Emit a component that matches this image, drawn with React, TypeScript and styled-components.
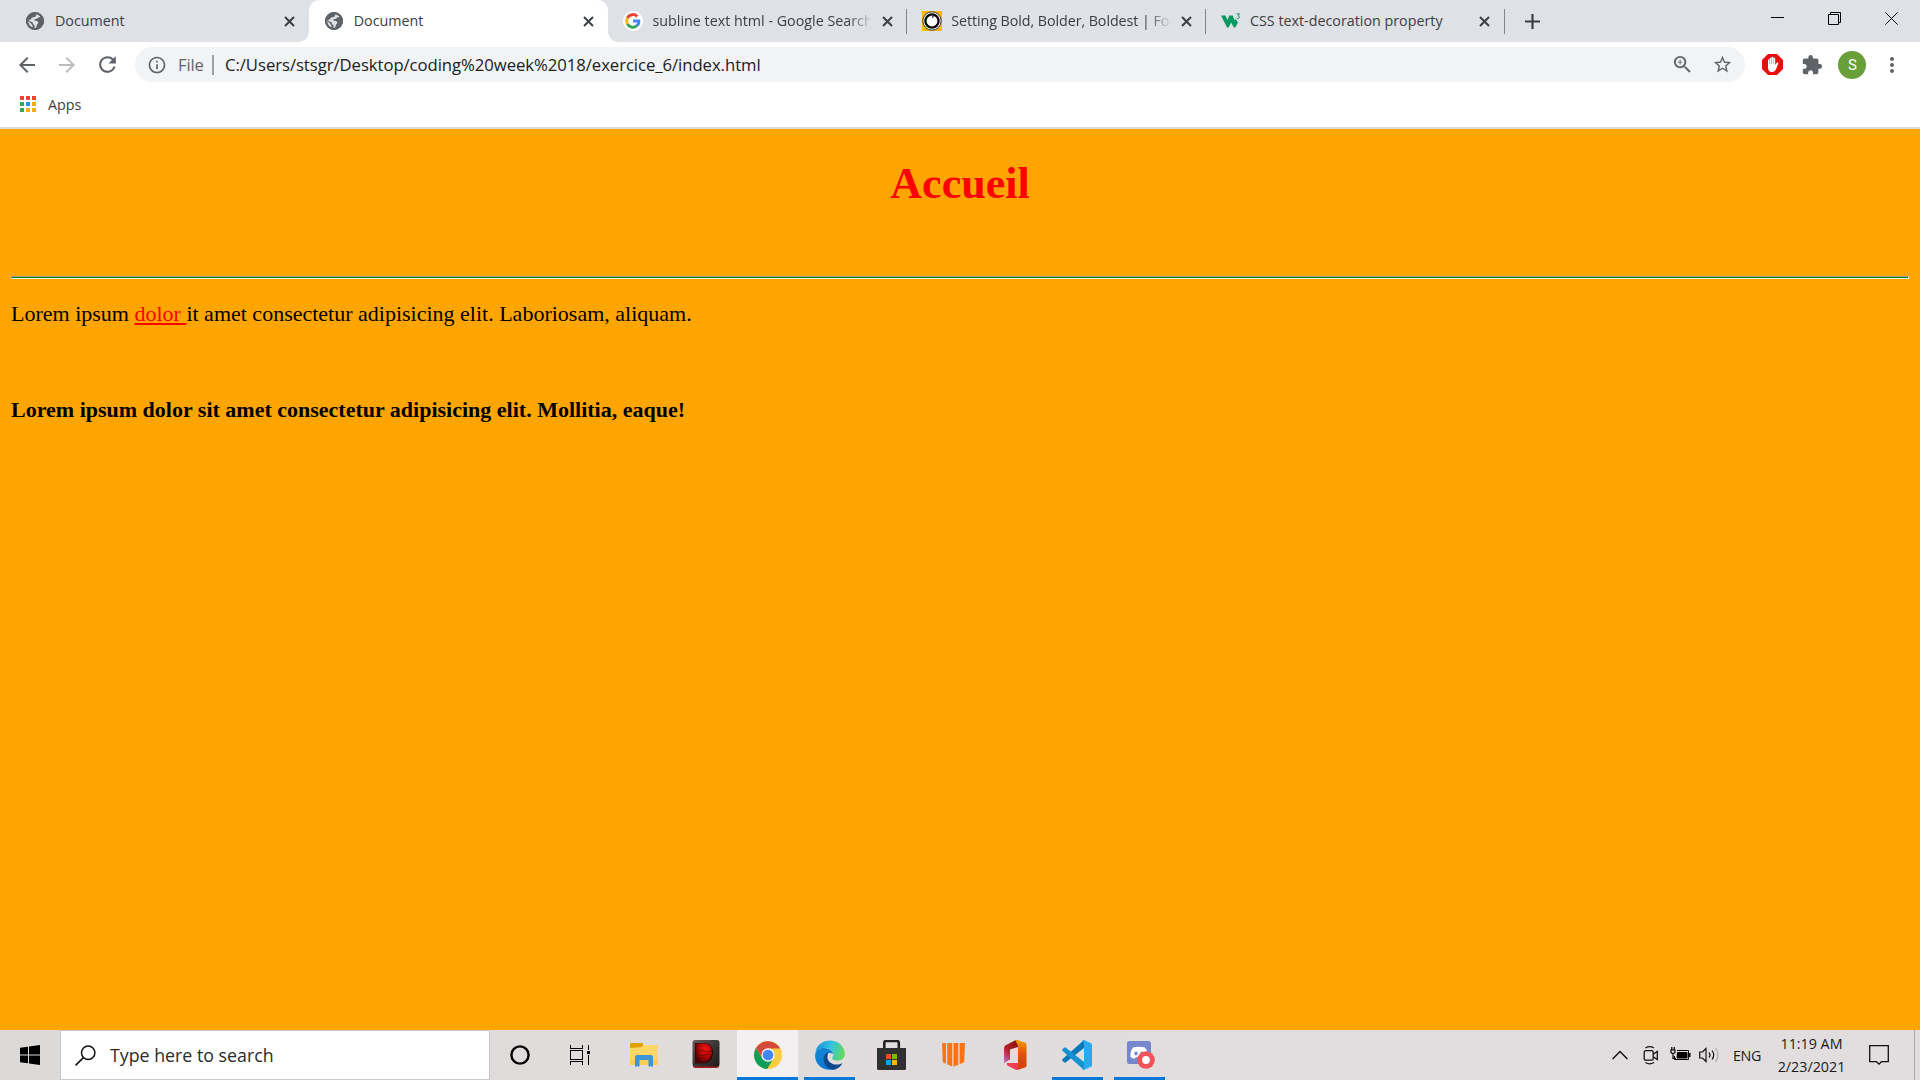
import React from "react";
import styled, { createGlobalStyle, css } from "styled-components";
import {
  MdArrowBack,
  MdArrowForward,
  MdRefresh,
  MdInfoOutline,
  MdZoomIn,
  MdStarBorder,
  MdExtension,
  MdMoreVert,
} from "react-icons/md";

const Global = createGlobalStyle`
  * { box-sizing: border-box; }
  body { margin: 0; background: #ffa500; overflow: hidden; }
  svg { display: block; flex: none; }
`;

const Screen = styled.div`
  width: 1920px;
  height: 1080px;
  display: flex;
  flex-direction: column;
  overflow: hidden;
  font-family: "Open Sans", "Noto Sans", sans-serif;
`;

/* ---------- browser frame ---------- */

const TabStrip = styled.div`
  height: 42px;
  background: #dee1e6;
  display: flex;
  padding-left: 10px;
`;

const TabBox = styled.div<{ $active?: boolean; $divider?: boolean }>`
  position: relative;
  width: 298.75px;
  height: 42px;
  display: flex;
  align-items: center;
  padding: 0 9px 0 15.5px;
  color: #3c4043;
  ${(p) =>
    p.$active &&
    css`
      background: #fff;
      border-radius: 10px 10px 0 0;
      &::before,
      &::after {
        content: "";
        position: absolute;
        bottom: 0;
        width: 10px;
        height: 10px;
      }
      &::before {
        left: -10px;
        background: radial-gradient(circle at 0 0, transparent 9.5px, #fff 10px);
      }
      &::after {
        right: -10px;
        background: radial-gradient(circle at 100% 0, transparent 9.5px, #fff 10px);
      }
    `}
  ${(p) =>
    p.$divider &&
    css`
      &::after {
        content: "";
        position: absolute;
        right: -1px;
        top: 9px;
        width: 1px;
        height: 25px;
        background: #80868b;
      }
    `}
`;

const Favicon = styled.div`
  width: 20px;
  height: 20px;
  display: grid;
  place-items: center;
  margin-right: 9.5px;
`;

const TabTitle = styled.div<{ $fade?: boolean; $spacing?: number }>`
  width: 218px;
  height: 22px;
  line-height: 22px;
  margin-top: -1px;
  overflow: hidden;
  white-space: nowrap;
  font-size: 14.3px;
  letter-spacing: ${(p) => p.$spacing ?? 0}px;
  ${(p) => p.$fade && css`mask-image: linear-gradient(90deg, #000 195px, transparent 221px);`}
`;

const TabClose = styled.div`
  width: 20px;
  display: grid;
  place-items: center;
  margin-left: 7px;
`;

const NewTab = styled.div`
  width: 58px;
  display: grid;
  place-items: center;
`;

const WindowButtons = styled.div`
  margin-left: auto;
  display: flex;
  height: 37px;
  align-items: center;
`;

const WindowButton = styled.div`
  width: 57px;
  display: grid;
  place-items: center;
`;

const Toolbar = styled.div`
  height: 45px;
  background: #fff;
  display: flex;
  align-items: center;
  padding-left: 7px;
  color: #5f6368;
`;

const NavButton = styled.div<{ $dim?: boolean }>`
  width: 40px;
  display: grid;
  place-items: center;
  color: ${(p) => (p.$dim ? "#bbbdbf" : "#5f6368")};
`;

const Omnibox = styled.div`
  width: 1610px;
  height: 35px;
  margin-left: 8px;
  border-radius: 18px;
  background: #f1f3f4;
  display: flex;
  align-items: center;
  padding: 0 11px 0 12px;
`;

const Scheme = styled.span`
  margin-left: 11px;
  width: 34px;
  font-size: 16.5px;
  letter-spacing: -0.1px;
  line-height: 24px;
`;

const SchemeDivider = styled.span`
  width: 2px;
  height: 20px;
  background: #9aa0a6;
  margin-right: 11px;
`;

const Address = styled.span`
  flex: 1;
  color: #202124;
  font-size: 16.7px;
  line-height: 24px;
  letter-spacing: -0.05px;
`;

const OmniAction = styled.div`
  width: 40px;
  display: grid;
  place-items: center;
  &:last-child {
    width: 24px;
    margin-left: 8px;
  }
`;

const Extensions = styled.div`
  display: flex;
  align-items: center;
  padding-left: 7.4px;
`;

const Avatar = styled.div`
  width: 28px;
  height: 28px;
  border-radius: 50%;
  background: #689f38;
  color: #fff;
  display: grid;
  place-items: center;
  font: 15px/28px Roboto, sans-serif;
`;

const Bookmarks = styled.div`
  height: 42px;
  background: #fff;
  border-bottom: 2px solid #dadce0;
  display: flex;
  align-items: center;
  padding: 0 0 6px 20px;
  color: #3c4043;
  font-size: 14.3px;
`;

const AppGrid = styled.div`
  display: grid;
  grid-template-columns: repeat(3, 4px);
  gap: 2.2px;
  margin-right: 11.5px;
`;

const AppDot = styled.i<{ $c: string }>`
  width: 4px;
  height: 4px;
  background: ${(p) => p.$c};
`;

/* ---------- document ---------- */

const Page = styled.main`
  height: 901px;
  background: #ffa500;
  padding: 30px 11px 0;
  font-family: "Liberation Serif", "Times New Roman", serif;
  font-size: 22px;
  line-height: 25px;
  color: #000;
`;

const Heading = styled.h1`
  margin: 0;
  font-size: 44px;
  line-height: 50px;
  text-align: center;
  color: red;
`;

const Rule = styled.hr`
  margin: 67px 0 22px;
  height: 3px;
  border: 1px solid;
  border-color: #9a9a9a #eee #eee #9a9a9a;
  background: green;
`;

const Paragraph = styled.p`
  margin: 0;
`;

const Marked = styled.span`
  color: red;
  text-decoration: underline;
`;

const Strong = styled.p`
  margin: 71px 0 0;
  font-weight: bold;
`;

/* ---------- taskbar ---------- */

const Taskbar = styled.footer`
  height: 50px;
  display: flex;
  background: linear-gradient(90deg, #dbdad8, #e0dcdc 30%, #e2dedf);
`;

const Start = styled.div`
  width: 60px;
  display: grid;
  place-items: center;
`;

const SearchBox = styled.div`
  width: 430px;
  height: 50px;
  background: #fff;
  border: 1px solid #c8c8ca;
  display: flex;
  align-items: center;
  padding-left: 14px;
  color: #2b2b2b;
  font-size: 17.8px;
`;

const SearchHint = styled.span`
  margin-left: 14px;
  letter-spacing: 0;
  line-height: 26px;
`;

const ShellSlot = styled.div`
  width: 60px;
  display: grid;
  place-items: center;
`;

const Apps = styled.div`
  display: flex;
  margin-left: 3px;
`;

const AppSlot = styled.div<{ $state?: "open" | "focused" }>`
  width: 61.9px;
  height: 50px;
  display: grid;
  place-items: center;
  ${(p) =>
    p.$state &&
    css`
      background-image: linear-gradient(#0078d7, #0078d7)
        ${p.$state === "focused" ? ", linear-gradient(#f3f0f1, #f3f0f1)" : ""};
      background-repeat: no-repeat;
      background-position: center bottom;
      background-size: ${p.$state === "focused" ? "61px 3px, 61px 50px" : "51px 3px"};
    `}
`;

const Tray = styled.div`
  margin-left: auto;
  display: flex;
  align-items: center;
  color: #1a1a1a;
`;

const TraySlot = styled.div<{ $w: number }>`
  width: ${(p) => p.$w}px;
  display: grid;
  place-items: center;
`;

const Language = styled(TraySlot)`
  font-size: 14.3px;
  letter-spacing: -0.3px;
`;

const Clock = styled.div`
  width: 85px;
  text-align: center;
  font-size: 14.3px;
  line-height: 23px;
  letter-spacing: 0;
  white-space: nowrap;
`;

const NotificationSlot = styled.div`
  width: 60px;
  padding-left: 15px;
`;

const DesktopPeek = styled.div`
  width: 6px;
  height: 50px;
  border-left: 1px solid #aaa8a9;
`;

/* ---------- drawings ---------- */

const Cross = () => (
  <svg width="11" height="11" viewBox="0 0 11 11">
    <path d="M1 1l9 9M10 1l-9 9" stroke="#3c4043" strokeWidth="2" />
  </svg>
);

const Globe = () => (
  <svg width="18" height="18" viewBox="0 0 18 18">
    <circle cx="9" cy="9" r="9" fill="#5f6368" />
    <path d="M10.5 2.1C12 2.5 13.7 3.7 14.6 5.200L12.500 5.200 11 6.800 8.500 7.200 8.200 8.600 11.200 8.900 12.500 10.800 11 12.500 10.300 15.400 8.500 16 8.600 13.400 7 12 6.800 10.500 3.200 8.800 2.200 7.600 4.300 8 5 6.600 7 5.200 9.500 4.800z" fill="#dfe1e5" />
    <path d="M2.200 8.800C2 12 4 14.500 6.800 15.600L6.400 13.500 5 11.500z" fill="#dfe1e5" />
    <circle cx="9" cy="9" r="8" fill="none" stroke="#5f6368" strokeWidth="2" />
  </svg>
);

const GoogleMark = () => (
  <svg width="20" height="20" viewBox="0 0 20 20">
    <circle cx="10" cy="10" r="10" fill="#fff" />
    <g fill="none" strokeWidth="3">
      <path d="M4.400 7A6.100 6.100 0 0 1 14.300 5.500" stroke="#ea4335" />
      <path d="M4.400 7a6.300 6.300 0 0 0 0 6" stroke="#fbbc05" />
      <path d="M4.400 13a6.100 6.100 0 0 0 9.500 1.700" stroke="#34a853" />
      <path d="M13.900 14.700C15.500 13.300 16 11.600 15.800 10H10" stroke="#4285f4" />
    </g>
  </svg>
);

const RingMark = () => (
  <svg width="20" height="20" viewBox="0 0 20 20">
    <path d="M0 0h20v20H0z" fill="#ffb900" />
    <circle cx="10" cy="10" r="9.200" fill="#fff" stroke="#333" strokeWidth="1" />
    <circle cx="10" cy="10" r="6.600" fill="#fff" stroke="#000" strokeWidth="2.300" />
    <path d="M11.500 4.500a5.600 5.600 0 0 0-1 2.200" fill="none" stroke="#000" strokeWidth="1.200" />
  </svg>
);

const SchoolMark = () => (
  <svg width="20" height="20" viewBox="0 0 20 20">
    <path d="M0 4.500h4.500L6.500 9 8.300 4.500h3.400l2 5 1.200-1.500 2 3.700L14.200 16.500h-1.400L10.200 11.500 7.500 16.500H6z" fill="#059862" />
    <path d="M15.500 2.800h3L17 5c2.300.2 2 2.800-.4 2.500l-1-.4" fill="none" stroke="#059862" strokeWidth="1" />
  </svg>
);

const AdBlock = () => (
  <svg width="21" height="21" viewBox="0 0 21 21">
    <path d="M6 0h9l6 6v9l-6 6H6l-6-6V6z" fill="#ed0c0c" />
    <path d="M6 11V6.200a.85.850 0 0 1 1.700 0V4.600a.9.900 0 0 1 1.800 0V3.800a.9.900 0 0 1 1.900 0v.9a.9.900 0 0 1 1.800 0V11l1.600-2.200c.9-.7 1.900 0 1.400 1L13.800 15.800Q12.600 18 10 18 6 18 6 13.500z" fill="#fff" />
    <path d="M7.700 5.500v4.500M9.500 4.500V10M11.400 4.500V10" stroke="#ed0c0c" strokeWidth=".35" />
  </svg>
);

const WindowsLogo = () => (
  <svg width="20" height="20" viewBox="0 0 20 20">
    <path d="M0 2.800l8-1.100v7.800H0zM9 1.500L20 0v9.500H9zM0 10.500h8v7.800l-8-1.100zM9 10.500h11V20L9 18.500z" />
  </svg>
);

const SearchGlyph = () => (
  <svg width="21" height="21" viewBox="0 0 21 21" fill="none" stroke="#111" strokeWidth="1.500">
    <circle cx="13.200" cy="7.800" r="6.700" />
    <path d="M8.400 12.600L.6 20.400" />
  </svg>
);

const CortanaRing = () => (
  <svg width="20" height="20" viewBox="0 0 20 20">
    <circle cx="10" cy="10" r="8.600" fill="none" stroke="#000" strokeWidth="2.400" />
  </svg>
);

const TaskView = () => (
  <svg width="20" height="20" viewBox="0 0 20 20" fill="none" stroke="#000" strokeWidth="1.200" shapeRendering="crispEdges">
    <path d="M.5 0v3.500h12V0M.5 20v-3.500h12V20M.5 5.500h12v9H.5zM18.500 0v5M18.500 10v10" />
    <path d="M17 6h3v3h-3z" fill="#000" stroke="none" />
  </svg>
);

const Folder = () => (
  <svg width="28" height="24" viewBox="0 0 28 24">
    <path d="M0 1q0-1 1-1h11q1 0 1 1v5H0z" fill="#e0a106" />
    <path d="M0 5l11-.7L14 2h13q1 0 1 1v18q0 1-1 1H1q-1 0-1-1z" fill="#ffd766" />
    <path d="M0 17h28v4q0 1-1 1H1q-1 0-1-1z" fill="#fbcf55" />
    <path d="M5 23.500V14q0-2 2-2h14q2 0 2 2v9.500h-4.500V17h-9v6.500z" fill="#3d96d6" />
  </svg>
);

const RedDisc = () => (
  <svg width="28" height="30" viewBox="0 0 28 30">
    <defs>
      <linearGradient id="disc-frame" x1="0" y1="0" x2="1" y2="1">
        <stop stopColor="#6a5d5c" /><stop offset=".5" stopColor="#3b3636" /><stop offset="1" stopColor="#241a1a" />
      </linearGradient>
      <radialGradient id="disc-red" cx=".6" cy=".3" r=".7"><stop stopColor="#f01616" /><stop offset=".6" stopColor="#b40707" /><stop offset="1" stopColor="#4a0404" /></radialGradient>
    </defs>
    <rect x="1" y="1" width="26" height="27" rx="2.500" fill="#a31b1b" />
    <rect x=".5" y="0" width="27" height="26.500" rx="2.500" fill="url(#disc-frame)" />
    <path d="M3 3h10c11 1 11 19-1 20.500H3z" fill="#3a0505" />
    <path d="M4 3.500H13c9.500 1 9 16.500-1 18.500L4.500 23z" fill="url(#disc-red)" />
    <path d="M5 11.500l6-1 3 1.500 6-1M5 15l6 .5 7-1.500M4.500 18l9-.5" stroke="#5e0505" fill="none" strokeWidth=".7" />
  </svg>
);

const Chrome = () => (
  <svg width="28" height="28" viewBox="0 0 28 28">
    <circle cx="14" cy="14" r="14" fill="#ffcd40" />
    <path d="M1.900 7A14 14 0 0 1 26.100 7.500H14L8.400 17.200z" fill="#d5493c" />
    <path d="M1.900 7A14 14 0 0 0 13.200 28l6.400-10.800H8.400z" fill="#0f9d58" />
    <circle cx="14" cy="14" r="6.700" fill="#f4f4f4" />
    <circle cx="14" cy="14" r="5.300" fill="#4285f4" />
  </svg>
);

const Edge = () => (
  <svg width="30" height="30" viewBox="0 0 30 30">
    <defs>
      <linearGradient id="edge-top" x1="0" y1=".3" x2="1" y2=".5"><stop stopColor="#168fd7" /><stop offset=".5" stopColor="#32c4e4" /><stop offset="1" stopColor="#62da5a" /></linearGradient>
      <linearGradient id="edge-side" x1="0" y1="0" x2=".5" y2="1"><stop stopColor="#1687d2" /><stop offset="1" stopColor="#0878d4" /></linearGradient>
    </defs>
    <path d="M.3 12.500C2-2 26-5 29.700 12c1 6-3 9-8 8.500-4-.2-5.500-2-4-3.500C20 13 16 7.500 9 8 4 8 1 10 .3 12.500z" fill="url(#edge-top)" />
    <path d="M.2 14C1 9.500 5 7.500 9.500 8c5 .3 8.500 3 8.500 6-6-3-9 2-6.500 7 1.500 4 4 7 8 8C9 32-1 25 .2 14z" fill="url(#edge-side)" />
    <path d="M13.500 12.300C7 13.500 6 27 17 29.800c4 .5 9-3 10.500-6.800-6 3.500-14 1-15-5-.2-2 .2-4 1-5.700z" fill="#104a8e" />
  </svg>
);

const Store = () => (
  <svg width="29" height="30" viewBox="0 0 29 30">
    <path d="M7.300 10V3q0-2 2-2h10.500q2 0 2 2v7" fill="none" stroke="#222" strokeWidth="2.600" />
    <path d="M0 8h29v20.500q0 1.500-1.500 1.500h-26Q0 30 0 28.500z" fill="#303030" />
    <path d="M9 14h5v5H9z" fill="#f25022" />
    <path d="M15 14h5v5h-5z" fill="#7fba00" />
    <path d="M9 20h5v5H9z" fill="#00a4ef" />
    <path d="M15 20h5v5h-5z" fill="#ffb900" />
  </svg>
);

const OpsBars = () => (
  <svg width="23" height="24" viewBox="0 0 23 24" fill="#ff7411">
    <path d="M0 0h4v20.700L.8 19.300zM5.200 0h5v23.500l-5-2.200zM11.500 0h4.800v21.800l-4.800 2zM17.600 0H23l-.8 19.300-4.600 2z" />
  </svg>
);

const Office = () => (
  <svg width="24" height="30" viewBox="0 0 24 30">
    <defs>
      <linearGradient id="office-a" x1="0" y1="1" x2=".7" y2="0"><stop stopColor="#c86bcf" /><stop offset=".5" stopColor="#b7242c" /><stop offset="1" stopColor="#8b1411" /></linearGradient>
      <linearGradient id="office-b" x1="0" y1="0" x2="0" y2="1"><stop stopColor="#f29b05" /><stop offset=".45" stopColor="#e25302" /><stop offset="1" stopColor="#d63b01" /></linearGradient>
    </defs>
    <path d="M1 8Q1 6 3 5L12 .5 15 0v7l-8 2.500V19.500L1 23z" fill="url(#office-a)" />
    <path d="M12.500.500Q14-.2 15.500.4L22 2.500q1.500.5 1.500 2v21q0 1.500-1.500 2L15 29.700V6z" fill="url(#office-b)" />
    <path d="M4.500 23H15v6.700q-1.500.5-3-.2L4.500 25.500Q3 23.500 4.500 23z" fill="#ef3e55" />
  </svg>
);

const VSCode = () => (
  <svg width="30" height="30" viewBox="0 0 30 30">
    <path d="M22 0v8L4 22.300q-1 .7-2 0L.6 21q-1-1 0-2z" fill="#0c78b8" />
    <path d="M22 30v-8L4 7.700q-1-.7-2 0L.6 9q-1 1 0 2z" fill="#1691d2" />
    <path d="M22 0l7 3.200q1 .6 1 1.600v20.400q0 1-1 1.600L22 30q-1 .2-2-1l2-1.500v-25L20 1q1-1.200 2-1z" fill="#29a9f2" />
  </svg>
);

const Discord = () => (
  <svg width="31" height="28" viewBox="-3 0 31 28">
    <rect width="24" height="23" rx="2.500" fill="#7887cc" />
    <path d="M6 6.500Q11 4.800 18 6.500q3 4 2.500 9.500-2 1.800-4.200 1.700l-1-1.500H8.700l-1 1.500Q5.500 17.700 3.500 16 3 10.500 6 6.500z" fill="#fff" />
    <ellipse cx="9" cy="12.500" rx="1.700" ry="1.900" fill="#7887cc" />
    <ellipse cx="15" cy="12.500" rx="1.700" ry="1.900" fill="#7887cc" />
    <circle cx="19" cy="19" r="8.800" fill="#f05358" />
    <circle cx="19" cy="19" r="3.900" fill="#fff" />
  </svg>
);

const Chevron = () => (
  <svg width="16" height="10" viewBox="0 0 16 10">
    <path d="M.6 9L8 1.500 15.400 9" fill="none" stroke="#111" strokeWidth="1.400" />
  </svg>
);

const MeetNow = () => (
  <svg width="16" height="20" viewBox="0 0 16 20" fill="none" stroke="#111" strokeWidth="1.300">
    <rect x="1.200" y="5.700" width="9" height="9.500" rx="1.500" />
    <path d="M10.500 9l3.800-2.500v8l-3.800-2.500M2.500 3q4-2.600 8.500 0M2.500 17.500q4 2.600 8.500 0" />
  </svg>
);

const Battery = () => (
  <svg width="21" height="16" viewBox="0 0 21 16">
    <path d="M7 3.500h11.500v9H4.500V9" fill="none" stroke="#000" />
    <path d="M7.500 5.500h9.500v5.500H7z" stroke="#000" />
    <path d="M19 6h1.500v4H19z" />
    <path d="M1.800 0v3M4.200 0v3M1 3h4v2.500L3 7 1 5.500zM3 7v4.500h3" fill="none" stroke="#000" strokeWidth="1.200" />
  </svg>
);

const Volume = () => (
  <svg width="21" height="18" viewBox="0 0 21 18" fill="none" stroke="#111" strokeWidth="1.200">
    <path d="M.7 6h2.800L7 2.500v13L3.500 12H.7zM10 6.500q2 2.500 0 5M13 4.500q3.500 4.500 0 9" />
    <path d="M16.500 2q5 7 0 14" stroke="#aaa" />
  </svg>
);

const Notifications = () => (
  <svg width="20" height="21" viewBox="0 0 20 21">
    <path d="M.7.700h18.600v16H12.500L10 19.200 7.500 16.700H.7z" fill="none" stroke="#111" strokeWidth="1.300" />
  </svg>
);

/* ---------- composition ---------- */

const tabs = [
  { title: "Document", icon: <Globe /> },
  { title: "Document", icon: <Globe />, active: true },
  { title: "subline text html - Google Search", icon: <GoogleMark />, divider: true, fade: true },
  { title: "Setting Bold, Bolder, Boldest | For", icon: <RingMark />, divider: true, fade: true, spacing: -0.07 },
  { title: "CSS text-decoration property", icon: <SchoolMark />, divider: true },
];

const gridColors = ["#f44336", "#f44336", "#f44336", "#34a853", "#2b8cf0", "#f6ae0c", "#34a853", "#f6ae0c", "#f6ae0c"];

const taskApps: { icon: React.ReactNode; state?: "open" | "focused" }[] = [
  { icon: <Folder /> },
  { icon: <RedDisc /> },
  { icon: <Chrome />, state: "focused" },
  { icon: <Edge />, state: "open" },
  { icon: <Store /> },
  { icon: <OpsBars /> },
  { icon: <Office /> },
  { icon: <VSCode />, state: "open" },
  { icon: <Discord />, state: "open" },
];

export default function App() {
  return (
    <Screen>
      <Global />
      <TabStrip>
        {tabs.map((t, i) => (
          <TabBox key={i} $active={t.active} $divider={t.divider}>
            <Favicon>{t.icon}</Favicon>
            <TabTitle $fade={t.fade} $spacing={t.spacing}>{t.title}</TabTitle>
            <TabClose><Cross /></TabClose>
          </TabBox>
        ))}
        <NewTab>
          <svg width="15" height="15" viewBox="0 0 15 15"><path d="M7.500 0v15M0 7.500h15" stroke="#3c4043" strokeWidth="2.200" /></svg>
        </NewTab>
        <WindowButtons>
          <WindowButton><svg width="13" height="4" viewBox="0 0 13 4"><path d="M0 .5h13" stroke="#000" /></svg></WindowButton>
          <WindowButton>
            <svg width="13" height="13" viewBox="0 0 13 13" fill="none" stroke="#000"><path d="M.5 2.500h10v10H.5zM2.500 2V.5h10v10H11" /></svg>
          </WindowButton>
          <WindowButton><svg width="13" height="13" viewBox="0 0 13 13"><path d="M.3.300l12.400 12.400M12.700.300L.3 12.700" stroke="#000" /></svg></WindowButton>
        </WindowButtons>
      </TabStrip>

      <Toolbar>
        <NavButton><MdArrowBack size={24} /></NavButton>
        <NavButton $dim><MdArrowForward size={24} /></NavButton>
        <NavButton><MdRefresh size={25} /></NavButton>
        <Omnibox>
          <MdInfoOutline size={20} />
          <Scheme>File</Scheme>
          <SchemeDivider />
          <Address>C:/Users/stsgr/Desktop/coding%20week%2018/exercice_6/index.html</Address>
          <OmniAction><MdZoomIn size={23} /></OmniAction>
          <OmniAction><MdStarBorder size={21} /></OmniAction>
        </Omnibox>
        <Extensions>
          <NavButton><AdBlock /></NavButton>
          <NavButton><MdExtension size={22} /></NavButton>
          <NavButton><Avatar>S</Avatar></NavButton>
          <NavButton><MdMoreVert size={24} /></NavButton>
        </Extensions>
      </Toolbar>

      <Bookmarks>
        <AppGrid>{gridColors.map((c, i) => <AppDot key={i} $c={c} />)}</AppGrid>
        Apps
      </Bookmarks>

      <Page>
        <Heading>Accueil</Heading>
        <Rule />
        <Paragraph>
          Lorem ipsum <Marked>dolor </Marked>it amet consectetur adipisicing elit. Laboriosam, aliquam.
        </Paragraph>
        <Strong>Lorem ipsum dolor sit amet consectetur adipisicing elit. Mollitia, eaque!</Strong>
      </Page>

      <Taskbar>
        <Start><WindowsLogo /></Start>
        <SearchBox><SearchGlyph /><SearchHint>Type here to search</SearchHint></SearchBox>
        <ShellSlot><CortanaRing /></ShellSlot>
        <ShellSlot><TaskView /></ShellSlot>
        <Apps>
          {taskApps.map((a, i) => <AppSlot key={i} $state={a.state}>{a.icon}</AppSlot>)}
        </Apps>
        <Tray>
          <TraySlot $w={30}><Chevron /></TraySlot>
          <TraySlot $w={31}><MeetNow /></TraySlot>
          <TraySlot $w={28}><Battery /></TraySlot>
          <TraySlot $w={31}><Volume /></TraySlot>
          <Language $w={44}>ENG</Language>
          <Clock>11:19 AM<br />2/23/2021</Clock>
          <NotificationSlot><Notifications /></NotificationSlot>
          <DesktopPeek />
        </Tray>
      </Taskbar>
    </Screen>
  );
}
